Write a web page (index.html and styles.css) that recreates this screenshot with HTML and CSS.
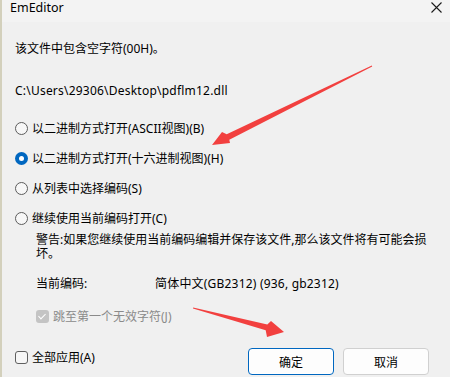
FILE: index.html
```html
<!DOCTYPE html>
<html lang="zh-CN">
<head>
  <meta charset="UTF-8" />
  <title>EmEditor</title>
  <link rel="stylesheet" href="styles.css">
</head>
<body>
  <div class="dialog">
    <div class="titlebar">
      <span class="title">EmEditor</span>
      <svg class="close" width="11" height="11" viewBox="0 0 11 11">
        <path d="M0.5 0.5 L10.5 10.5 M10.5 0.5 L0.5 10.5" stroke="#1a1a1a" stroke-width="1.1" fill="none"/>
      </svg>
    </div>

    <div class="content">
      <p class="msg">该文件中包含空字符(00H)。</p>
      <p class="path">C:\Users\29306\Desktop\pdflm12.dll</p>

      <div class="options">
        <label class="opt"><span class="radio"></span>以二进制方式打开(ASCII视图)(B)</label>
        <label class="opt"><span class="radio checked"></span>以二进制方式打开(十六进制视图)(H)</label>
        <label class="opt"><span class="radio"></span>从列表中选择编码(S)</label>
        <label class="opt"><span class="radio"></span>继续使用当前编码打开(C)</label>
      </div>

      <div class="indent">
        <p class="warning">警告:如果您继续使用当前编码编辑并保存该文件,那么该文件将有可能会损坏。</p>
        <div class="encoding">
          <span class="enc-label">当前编码:</span>
          <span class="enc-value">简体中文(GB2312) (936, gb2312)</span>
        </div>
        <label class="check disabled"><span class="box checked"></span>跳至第一个无效字符(J)</label>
      </div>
    </div>

    <div class="footer">
      <label class="check apply"><span class="box"></span>全部应用(A)</label>
      <div class="buttons">
        <button class="btn default">确定</button>
        <button class="btn">取消</button>
      </div>
    </div>

    <!-- annotation arrows drawn on top of the dialog -->
    <svg class="arrows" width="450" height="377" viewBox="0 0 450 377">
      <polygon fill="#f2403f" points="372.2,66.4 229.3,139.7 230,143 212,145 222,132 226.7,134.3 371.8,65.6"/>
      <polygon fill="#f2403f" points="193,308.5 265.7,330.3 267,337 284,332 271,321 267.3,324.5 193.1,307.5"/>
    </svg>
  </div>
</body>
</html>
```

FILE: styles.css
```css
body {
  margin: 0;
  background: #f0f0f0;
  font-family: "Noto Sans", "Noto Sans CJK SC", sans-serif;
  font-size: 12px;
  color: #000;
}

.dialog {
  position: relative;
  width: 450px;
  height: 377px;
  box-sizing: border-box;
  border-left: 2px solid #d3d0bc;
  overflow: hidden;
}

.titlebar {
  height: 22px;
  background: #f3f3f3;
  display: flex;
  align-items: flex-start;
  justify-content: space-between;
  padding: 0 8px 0 8px;
}

.title {
  line-height: 16px;
  font-size: 12.5px;
}

.close {
  margin-top: 2px;
}

.content {
  padding: 0 13px;
}

p {
  margin: 0;
}

.msg {
  margin-top: 19px;
  line-height: 16px;
}

.path {
  margin-top: 26px;
  line-height: 16px;
  letter-spacing: 0.22px;
}

.options {
  margin-top: 14px;
}

.opt {
  display: flex;
  align-items: center;
  height: 30px;
}

.radio {
  width: 11px;
  height: 11px;
  border: 1px solid #5c5c5c;
  border-radius: 50%;
  background: #f7f7f7;
  margin-right: 4px;
  flex: none;
}

.radio.checked {
  width: 13px;
  height: 13px;
  border: none;
  background: #0067c0;
  display: flex;
  align-items: center;
  justify-content: center;
}

.radio.checked::after {
  content: "";
  width: 5px;
  height: 5px;
  border-radius: 50%;
  background: #fff;
}

.indent {
  padding-left: 21px;
}

.warning {
  margin-top: 0;
  line-height: 14px;
  padding-right: 8px;
}

.encoding {
  display: flex;
  margin-top: 16px;
  line-height: 14px;
}

.enc-label {
  width: 119px;
}

.enc-value {
  letter-spacing: 0.2px;
}

.check {
  display: flex;
  align-items: center;
  height: 16px;
}

.check.disabled {
  margin-top: 17px;
  color: #8a8a8a;
}

.box {
  width: 11px;
  height: 11px;
  border: 1px solid #5f5f5f;
  border-radius: 3px;
  background: #f6f6f6;
  margin-right: 4px;
  flex: none;
  position: relative;
}

.box.checked {
  width: 13px;
  height: 13px;
  border: none;
  background: #c4c4c4;
}

.box.checked::after {
  content: "";
  position: absolute;
  left: 4px;
  top: 2.5px;
  width: 3px;
  height: 6px;
  border: solid #fff;
  border-width: 0 1.2px 1.2px 0;
  transform: rotate(45deg);
}

.footer {
  display: flex;
  justify-content: space-between;
  padding: 0 21px 0 13px;
  margin-top: 24px;
}

.check.apply {
  margin-top: 1px;
}

.buttons {
  display: flex;
  gap: 9px;
}

.btn {
  width: 86px;
  height: 27px;
  box-sizing: border-box;
  background: #fdfdfd;
  border: 1px solid #d0d0d0;
  border-radius: 4px;
  font-family: "Noto Sans", "Noto Sans CJK SC", sans-serif;
  font-size: 12px;
  color: #000;
  padding: 0;
}

.btn.default {
  border: 1px solid #0067c0;
  box-shadow: inset 0 0 0 1px #fff;
}

.arrows {
  position: absolute;
  top: 0;
  left: -2px;
  pointer-events: none;
}
```
